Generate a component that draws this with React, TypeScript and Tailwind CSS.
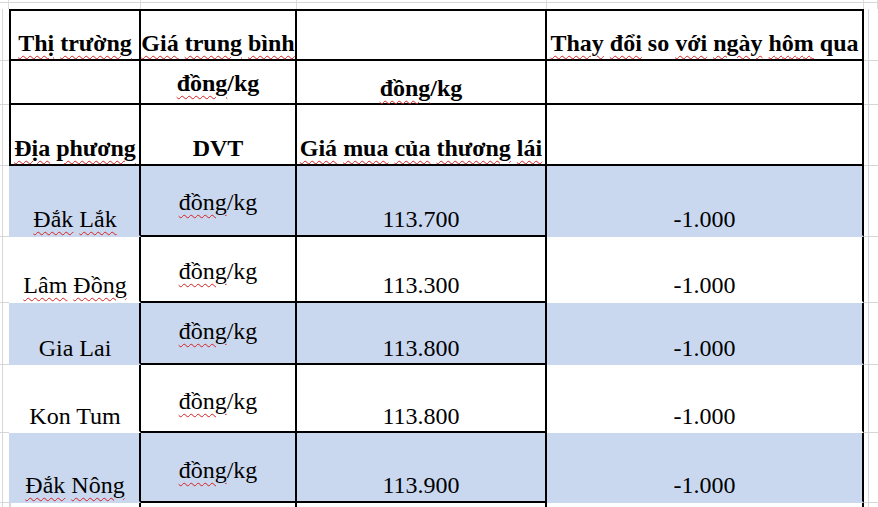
import React from "react";

const W = ({ children }: { children: React.ReactNode }) => (
  <span className="underline decoration-wavy decoration-[#d42020] decoration-1 underline-offset-[4px]">
    {children}
  </span>
);

const Side = ({ right = false }: { right?: boolean }) =>
  right ? (
    <div className="w-[15px] shrink-0 flex border-b border-[#d6d6d6]">
      <div className="w-[5px] border-r border-[#d6d6d6]" />
    </div>
  ) : (
    <div className="w-[9px] shrink-0 flex border-b border-[#d6d6d6]">
      <div className="w-[3px] border-r border-[#d6d6d6]" />
    </div>
  );

const CELL =
  "shrink-0 flex flex-col justify-end items-center text-center leading-6 whitespace-nowrap border-r-2 border-r-black";
const COL1 = "w-[132px] border-l-2";
const COL2 = "w-[156px]";
const COL3 = "w-[250px]";
const COL4 = "w-[317px]";

type Row = {
  place: React.ReactNode;
  price: string;
  change: string;
  blue: boolean;
  h: string;
  pb: string;
  unitPb: string;
};

const ROWS: Row[] = [
  { place: <><W>Đắk</W> <W>Lắk</W></>, price: "113.700", change: "-1.000", blue: true, h: "h-[71px]", pb: "pb-[4px]", unitPb: "pb-[21px]" },
  { place: <><W>Lâm</W> <W>Đồng</W></>, price: "113.300", change: "-1.000", blue: false, h: "h-[66px]", pb: "pb-[4px]", unitPb: "pb-[18px]" },
  { place: "Gia Lai", price: "113.800", change: "-1.000", blue: true, h: "h-[62px]", pb: "pb-[3px]", unitPb: "pb-[20px]" },
  { place: "Kon Tum", price: "113.800", change: "-1.000", blue: false, h: "h-[68px]", pb: "pb-[3px]", unitPb: "pb-[18px]" },
  { place: <><W>Đắk</W> <W>Nông</W></>, price: "113.900", change: "-1.000", blue: true, h: "h-[70px]", pb: "pb-[4px]", unitPb: "pb-[19px]" },
];

export default function App() {
  return (
    <div className="w-[878px] h-[507px] overflow-hidden bg-white text-black font-['Liberation_Serif',serif] text-[24px]">
      {/* excel gutter on top */}
      <div className="flex h-[9px]">
        {["w-[9px]", "w-[132px]", "w-[156px]", "w-[250px]", "w-[317px]", "w-[14px]"].map((w, i) => (
          <div key={i} className={`${w} shrink-0 border-r border-[#dcdcdc]`}>
            <div className="h-[3px] border-b border-[#d6d6d6]" />
          </div>
        ))}
      </div>

      {/* header */}
      <div className="font-bold">
        <div className="flex h-[52px]">
          <Side />
          <div className={`${CELL} ${COL1} border-l-black border-y-2 border-y-black pb-[4px]`}>
            <span>
              <W>Thị</W> <W>trường</W>
            </span>
          </div>
          <div className={`${CELL} ${COL2} border-y-2 border-y-black pb-[4px]`}>
            <span>
              <W>Giá</W> <W>trung</W> <W>bình</W>
            </span>
          </div>
          <div className={`${CELL} ${COL3} border-y-2 border-y-black`} />
          <div className={`${CELL} ${COL4} border-y-2 border-y-black pb-[4px]`}>
            <span>
              <W>Thay</W> <W>đổi</W> so <W>với</W> <W>ngày</W> <W>hôm</W> qua
            </span>
          </div>
          <Side right />
        </div>

        <div className="flex h-[44px]">
          <Side />
          <div className={`${CELL} ${COL1} border-l-black border-b-2 border-b-black`} />
          <div className={`${CELL} ${COL2} border-b-2 border-b-black pb-[8px]`}>
            <span>
              <W>đồng</W>/kg
            </span>
          </div>
          <div className={`${CELL} ${COL3} border-b-2 border-b-black pb-[3px]`}>
            <span>
              <W>đồng</W>/kg
            </span>
          </div>
          <div className={`${CELL} ${COL4} border-b-2 border-b-black`} />
          <Side right />
        </div>

        <div className="flex h-[61px]">
          <Side />
          <div className={`${CELL} ${COL1} border-l-black border-b-2 border-b-black pb-[4px]`}>
            <span>
              <W>Địa</W> <W>phương</W>
            </span>
          </div>
          <div className={`${CELL} ${COL2} border-b-2 border-b-black pb-[4px]`}>
            <span>DVT</span>
          </div>
          <div className={`${CELL} ${COL3} border-b-2 border-b-black pb-[4px]`}>
            <span>
              <W>Giá</W> <W>mua</W> <W>của</W> <W>thương</W> <W>lái</W>
            </span>
          </div>
          <div className={`${CELL} ${COL4} border-b-2 border-b-black`} />
          <Side right />
        </div>
      </div>

      {/* data rows */}
      {ROWS.map((r, i) => {
        const bg = r.blue ? "bg-[#cad8ef]" : "bg-white";
        return (
          <div key={i} className={`flex ${r.h}`}>
            <Side />
            <div className={`${CELL} ${COL1} ${bg} border-l-transparent border-b-2 border-b-transparent ${r.pb}`}>
              <span>{r.place}</span>
            </div>
            <div className={`${CELL} ${COL2} ${bg} border-b-2 border-b-black ${r.unitPb}`}>
              <span>
                <W>đồng</W>/kg
              </span>
            </div>
            <div className={`${CELL} ${COL3} ${bg} border-b-2 border-b-black ${r.pb}`}>
              <span>{r.price}</span>
            </div>
            <div className={`${CELL} ${COL4} ${bg} border-b-2 border-b-transparent ${r.pb}`}>
              <span>{r.change}</span>
            </div>
            <Side right />
          </div>
        );
      })}

      {/* next (empty) row, cut off by the window */}
      <div className="flex h-[30px]">
        <Side />
        <div className={`${CELL} ${COL1} border-l-[#d6d6d6]`} />
        <div className={`${CELL} ${COL2}`} />
        <div className={`${CELL} ${COL3}`} />
        <div className={`${CELL} ${COL4}`} />
        <Side right />
      </div>
    </div>
  );
}
